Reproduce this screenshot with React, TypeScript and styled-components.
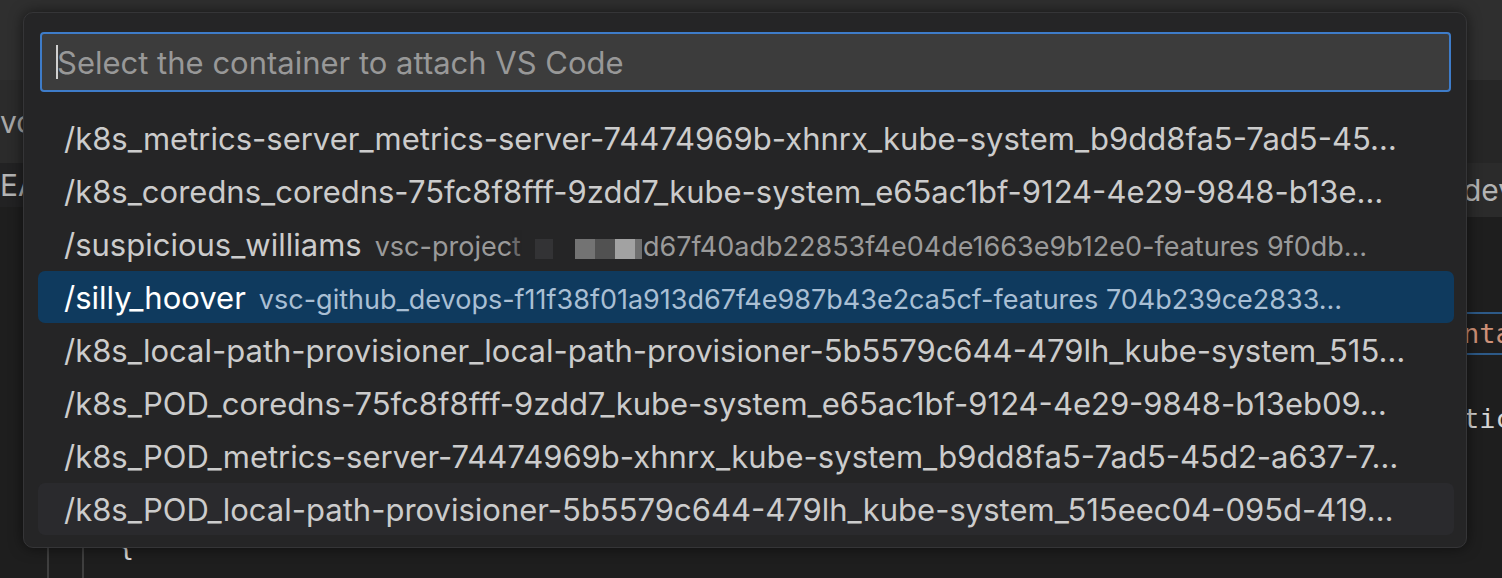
import React from "react";
import styled, { createGlobalStyle, css } from "styled-components";

const GlobalStyle = createGlobalStyle`
    html, body {
        margin: 0;
        padding: 0;
        background: #1e1e1e;
        overflow: hidden;
    }
    #root {
        height: 578px;
    }
`

const Screen = styled.div`
    position: relative;
    height: 578px;
    display: flex;
    flex-direction: column;
    font-family: "Inter", "Noto Sans", sans-serif;
    color: #cccccc;
`

const TitleBar = styled.div`
    height: 80px;
    background: #2f2f2f;
    flex-shrink: 0;
`

const Workbench = styled.div`
    flex: 1;
    display: flex;
    min-height: 0;
`

const Group = styled.div<{ $width?: number }>`
    display: flex;
    flex-direction: column;
    ${props => props.$width ? css`width: ${props.$width}px; flex-shrink: 0;` : css`flex: 1;`}
    overflow: hidden;
`

const TabBar = styled.div<{ $bg: string }>`
    height: 83px;
    background: ${props => props.$bg};
    display: flex;
    align-items: center;
    font-size: 30px;
    color: #a8a8a8;
    white-space: nowrap;
`

const Breadcrumbs = styled.div<{ $bg: string; $height: number; $pad?: number }>`
    height: ${props => props.$height}px;
    background: ${props => props.$bg};
    display: flex;
    align-items: center;
    padding-left: ${props => props.$pad ?? 4}px;
    font-size: 30px;
    color: #b4b4b4;
    white-space: nowrap;
`

const Code = styled.div<{ $guides?: boolean }>`
    flex: 1;
    display: flex;
    flex-direction: column;
    padding-top: 10px;
    font-family: "DejaVu Sans Mono", "Liberation Mono", monospace;
    font-size: 27px;
    color: #d4d4d4;
    ${props => props.$guides && css`
        justify-content: flex-end;
        padding-bottom: 11px;
        background-image:
            linear-gradient(#3f3f3f, #3f3f3f),
            linear-gradient(#3f3f3f, #3f3f3f);
        background-size: 2px 100%, 2px 100%;
        background-position: 47px 0, 82px 0;
        background-repeat: no-repeat;
    `}
`

const CodeLine = styled.div<{ $indent?: number; $match?: boolean }>`
    height: 42.5px;
    box-sizing: border-box;
    display: flex;
    align-items: center;
    padding-left: ${props => props.$indent || 4}px;
    white-space: nowrap;
    ${props => props.$match && css`
        border-top: 2px solid #2d5a88;
        border-bottom: 2px solid #2d5a88;
        color: #ce9178;
    `}
`

const Panel = styled.div`
    position: absolute;
    left: 23px;
    top: 12px;
    width: 1444px;
    height: 536px;
    box-sizing: border-box;
    background: #252526;
    border: 1px solid #353537;
    border-radius: 10px;
    box-shadow: 0 0 14px rgba(0, 0, 0, 0.55);
    padding: 19px 12px 0 14px;
    display: flex;
    flex-direction: column;
`

const InputBox = styled.div`
    height: 60px;
    margin: 0 3px 0 2px;
    box-sizing: border-box;
    background: #3c3c3c;
    border: 2px solid #3e7cc9;
    border-radius: 4px;
    display: flex;
    align-items: center;
    padding-left: 14px;
    font-size: 31px;
    color: #989898;
    white-space: nowrap;
`

const Caret = styled.span`
    width: 2px;
    height: 34px;
    background: #d0d0d0;
    margin-right: -1px;
`

const List = styled.div`
    margin-top: 20px;
    display: flex;
    flex-direction: column;
    gap: 1px;
`

const Row = styled.div<{ $state?: "selected" | "hover" }>`
    height: 52px;
    border-radius: 7px;
    display: flex;
    align-items: center;
    padding: 0 40px 0 26px;
    white-space: nowrap;
    overflow: hidden;
    color: #cccccc;
    ${props => props.$state === "selected" && css`
        background: #0f3a5e;
        color: #ffffff;
    `}
    ${props => props.$state === "hover" && css`
        background: #2a2a2d;
    `}
`

const Line = styled.span`
    overflow: hidden;
    text-overflow: ellipsis;
    white-space: nowrap;
`

const Label = styled.span`
    font-size: 31px;
`

const Description = styled.span<{ $selected?: boolean }>`
    font-size: 27px;
    margin-left: 13px;
    color: ${props => props.$selected ? "#a9bfd4" : "#9a9a9a"};
`

const Blot = styled.span<{ $w: number; $c: string; $gap?: number }>`
    display: inline-block;
    vertical-align: -3px;
    width: ${props => props.$w}px;
    height: 20px;
    margin-left: ${props => props.$gap || 0}px;
    background: ${props => props.$c};
`

const Faded = styled.span`
    opacity: 0.6;
`

const Tail = styled.span`
    margin-left: 1px;
`

type Item = { label: string; desc?: React.ReactNode; state?: "selected" | "hover" }

const redacted = (
    <>
        vsc-projec<Faded>t</Faded>
        <Blot $w={18} $c="#333335" $gap={14} />
        <Blot $w={20} $c="#737373" $gap={22} />
        <Blot $w={20} $c="#515151" />
        <Blot $w={20} $c="#a2a2a2" />
        <Blot $w={7} $c="#6f6f6f" />
        <Tail>d67f40adb22853f4e04de1663e9b12e0-features 9f0db…</Tail>
    </>
)

const items: Item[] = [
    { label: "/k8s_metrics-server_metrics-server-74474969b-xhnrx_kube-system_b9dd8fa5-7ad5-45…" },
    { label: "/k8s_coredns_coredns-75fc8f8fff-9zdd7_kube-system_e65ac1bf-9124-4e29-9848-b13e…" },
    { label: "/suspicious_williams", desc: redacted },
    { label: "/silly_hoover", desc: "vsc-github_devops-f11f38f01a913d67f4e987b43e2ca5cf-features 704b239ce2833…", state: "selected" },
    { label: "/k8s_local-path-provisioner_local-path-provisioner-5b5579c644-479lh_kube-system_515…" },
    { label: "/k8s_POD_coredns-75fc8f8fff-9zdd7_kube-system_e65ac1bf-9124-4e29-9848-b13eb09…" },
    { label: "/k8s_POD_metrics-server-74474969b-xhnrx_kube-system_b9dd8fa5-7ad5-45d2-a637-7…" },
    { label: "/k8s_POD_local-path-provisioner-5b5579c644-479lh_kube-system_515eec04-095d-419…", state: "hover" },
]

const App = () => {
    return (
        <>
            <GlobalStyle />
            <Screen>
                <TitleBar />
                <Workbench>
                    <Group $width={1459}>
                        <TabBar $bg="#2b2b2b">vo</TabBar>
                        <Breadcrumbs $bg="#222223" $height={44} $pad={0}>EA</Breadcrumbs>
                        <Code $guides>
                            <CodeLine $indent={118}>{"{"}</CodeLine>
                        </Code>
                    </Group>
                    <Group>
                        <TabBar $bg="#262626" />
                        <Breadcrumbs $bg="#2b2b2b" $height={54}>dev</Breadcrumbs>
                        <Code>
                            <CodeLine />
                            <CodeLine />
                            <CodeLine $match>nta</CodeLine>
                            <CodeLine />
                            <CodeLine>tic</CodeLine>
                        </Code>
                    </Group>
                </Workbench>
                <Panel>
                    <InputBox>
                        <Caret />
                        Select the container to attach VS Code
                    </InputBox>
                    <List>
                        {items.map((item, i) => (
                            <Row key={i} $state={item.state}>
                                <Line>
                                    <Label>{item.label}</Label>
                                    {item.desc && (
                                        <Description $selected={item.state === "selected"}>{item.desc}</Description>
                                    )}
                                </Line>
                            </Row>
                        ))}
                    </List>
                </Panel>
            </Screen>
        </>
    )
}

export default App;
